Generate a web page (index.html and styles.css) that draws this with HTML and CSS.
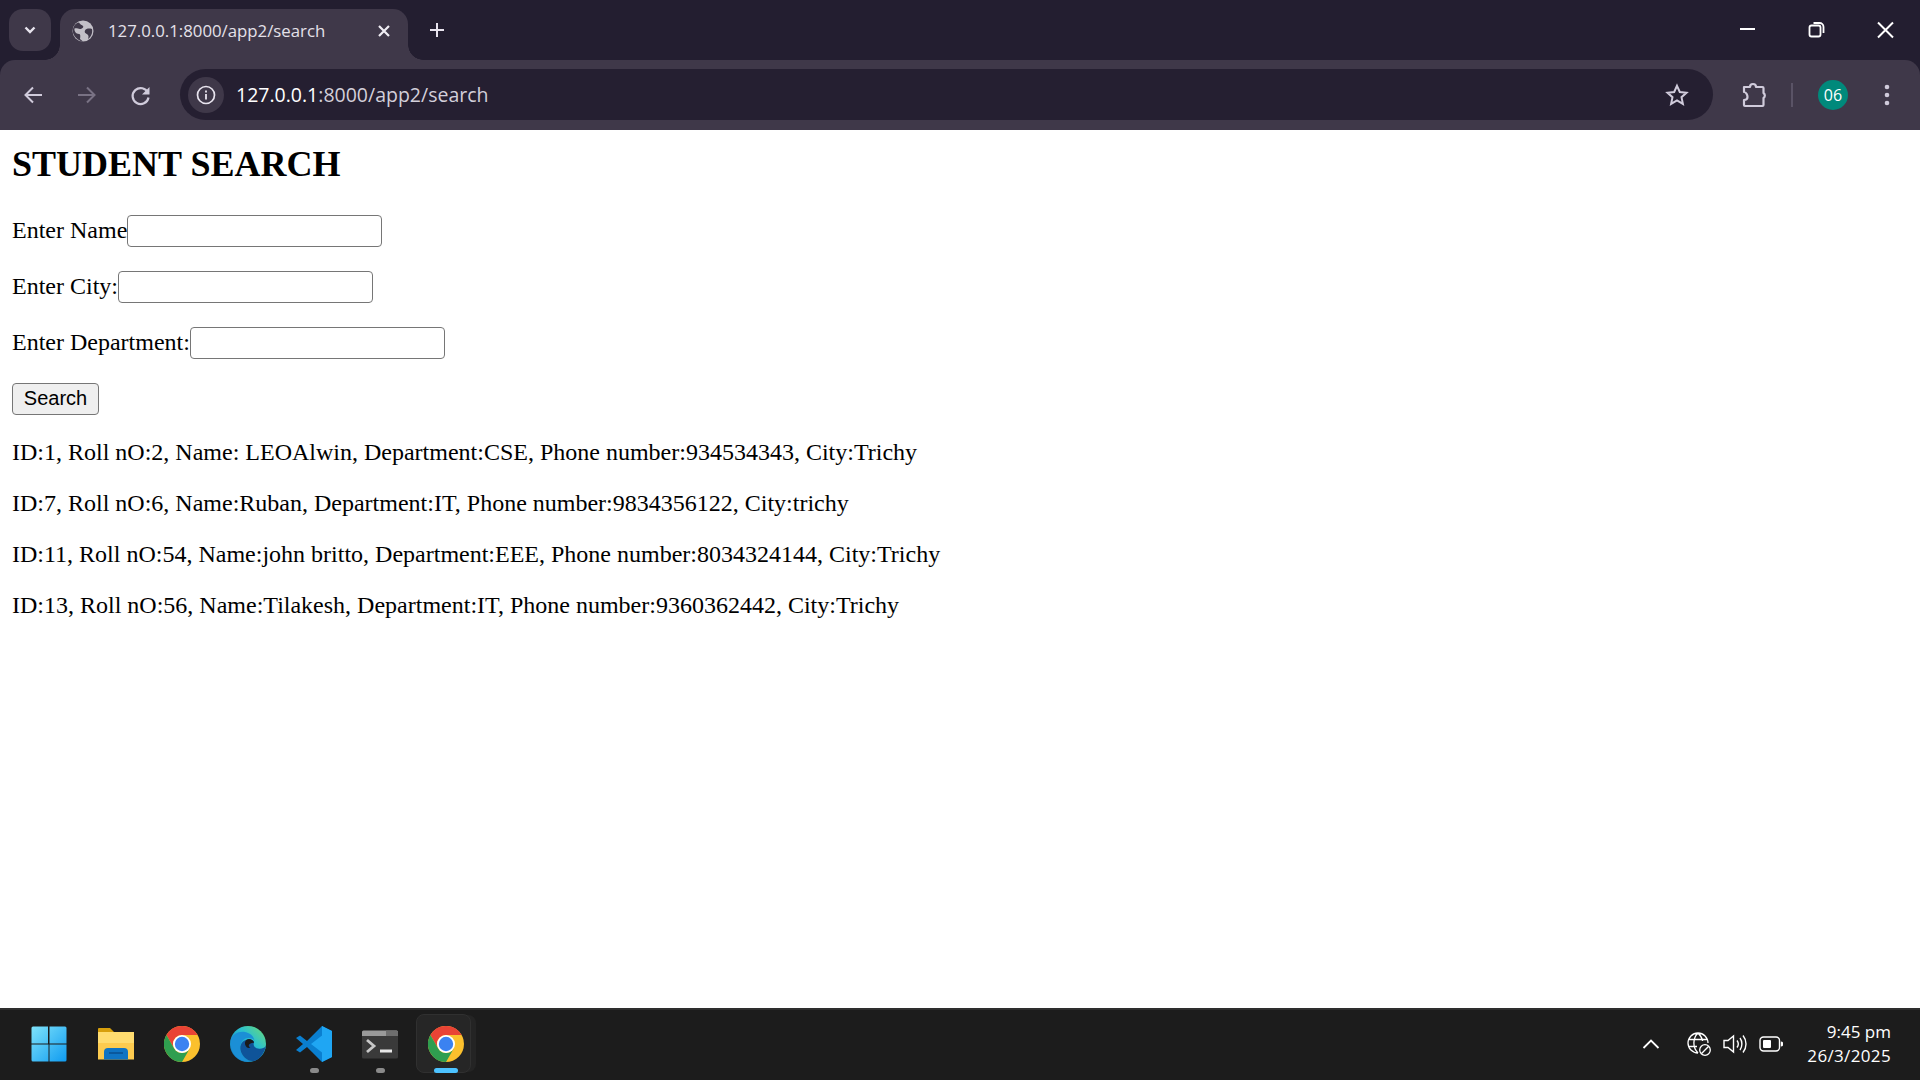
FILE: index.html
```html
<!DOCTYPE html>
<html lang="en">
<head>
<meta charset="utf-8">
<title>127.0.0.1:8000/app2/search</title>
<link rel="stylesheet" href="styles.css">
</head>
<body>
<div class="screen">
  <header class="chrome">
    <div class="tabstrip">
      <div class="tabsearch"><svg width="18" height="18" viewBox="0 0 18 18"><path d="M4.500 6.500L9 11l4.500-4.500" fill="none" stroke="#e8e4ee" stroke-width="2.400"/></svg></div>
      <div class="tab">
        <svg class="favicon" width="22" height="22" viewBox="0 0 22 22"><circle cx="11" cy="11" r="10.500" fill="#c3c0c8"/><path d="M7 2.500c1 2 3 2.500 4 3.500s-1 3-3 3-3-1-5.500-.5C2 11 4 14 7 14c1.500 0 1.500 2 1 5l3 2.500C7 21 1 17 .8 11 .8 6 4 3 7 2.500zM20 9c-3-1-6-.5-7 1.500s1 3 2.500 4 1 3 .5 4.500c3-2 4.800-6 4-10z" fill="#3f3849"/></svg>
        <span class="tabtitle">127.0.0.1:8000/app2/search</span>
        <svg class="tabclose" width="14" height="14" viewBox="0 0 14 14"><path d="M2 2l10 10M12 2L2 12" stroke="#f0edf4" stroke-width="2.200"/></svg>
      </div>
      <svg class="newtab" width="18" height="18" viewBox="0 0 18 18"><path d="M9 2v14M2 9h14" stroke="#e8e4ee" stroke-width="2"/></svg>
      <div class="caption">
        <svg width="70" height="60" viewBox="0 0 70 60"><path d="M28 29h15" stroke="#fff" stroke-width="2"/></svg>
        <svg width="70" height="60" viewBox="0 0 70 60"><path d="M27.500 27.500a2 2 0 0 1 2-2h7a2 2 0 0 1 2 2v7a2 2 0 0 1-2 2h-7a2 2 0 0 1-2-2zM31.500 23h6a4 4 0 0 1 4 4v6" fill="none" stroke="#fff" stroke-width="1.800"/></svg>
        <svg width="68" height="60" viewBox="0 0 68 60"><path d="M26 22.500l15 15M41 22.500l-15 15" stroke="#fff" stroke-width="2"/></svg>
      </div>
    </div>
    <div class="toolbar">
      <svg class="navicon" width="24" height="24" viewBox="0 0 24 24"><path d="M21 12H5M12 4.500L4.500 12l7.500 7.500" fill="none" stroke="#d0cbdb" stroke-width="2"/></svg>
      <svg class="navicon" width="24" height="24" viewBox="0 0 24 24"><path d="M3 12h16M12 4.500l7.500 7.500-7.500 7.500" fill="none" stroke="#797284" stroke-width="2"/></svg>
      <svg class="navicon" width="24" height="24" viewBox="0 0 24 24"><path d="M19 10a8 8 0 1 0 .5 4.500" fill="none" stroke="#d0cbdb" stroke-width="2.200"/><path d="M20.500 4v7.500H13z" fill="#d0cbdb"/></svg>
      <div class="omnibox">
        <div class="siteinfo"><svg width="20" height="20" viewBox="0 0 20 20"><circle cx="10" cy="10" r="8.500" fill="none" stroke="#e8e4ee" stroke-width="1.700"/><path d="M10 9v5.500M10 5.500v2" stroke="#e8e4ee" stroke-width="1.800"/></svg></div>
        <span class="url"><span class="host">127.0.0.1</span>:8000/app2/search</span>
        <svg class="star" width="24" height="24" viewBox="0 0 24 24"><path d="M12 2.800l2.800 6.200 6.700.7-5 4.500 1.400 6.700-5.900-3.400-5.900 3.400 1.400-6.700-5-4.500 6.700-.7z" fill="none" stroke="#d0cbdb" stroke-width="2"/></svg>
      </div>
      <svg class="puzzle" width="26" height="26" viewBox="0 0 26 26"><path d="M3 5h6a3 3 0 0 1 6 0h6.500a1 1 0 0 1 1 1v5a3 3 0 0 1 0 5v7a1 1 0 0 1-1 1H4a1 1 0 0 1-1-1v-5c3 0 3.500-1.500 3.500-3S5.500 10 3 10z" fill="none" stroke="#d0cbdb" stroke-width="2.200" stroke-linejoin="round"/></svg>
      <div class="divider"></div>
      <div class="avatar">06</div>
      <svg class="kebab" width="8" height="24" viewBox="0 0 8 24"><circle cx="4" cy="4" r="2.300" fill="#d0cbdb"/><circle cx="4" cy="12" r="2.300" fill="#d0cbdb"/><circle cx="4" cy="20" r="2.300" fill="#d0cbdb"/></svg>
    </div>
  </header>

  <main class="page">
    <h2 class="title">STUDENT SEARCH</h2>
    <form class="search">
      <p class="row">Enter Name<input class="field" type="text"></p>
      <p class="row">Enter City:<input class="field" type="text"></p>
      <p class="row">Enter Department:<input class="field" type="text"></p>
      <p class="row"><button class="btn" type="button">Search</button></p>
    </form>
    <p class="result">ID:1, Roll nO:2, Name: LEOAlwin, Department:CSE, Phone number:934534343, City:Trichy</p>
    <p class="result">ID:7, Roll nO:6, Name:Ruban, Department:IT, Phone number:9834356122, City:trichy</p>
    <p class="result">ID:11, Roll nO:54, Name:john britto, Department:EEE, Phone number:8034324144, City:Trichy</p>
    <p class="result">ID:13, Roll nO:56, Name:Tilakesh, Department:IT, Phone number:9360362442, City:Trichy</p>
  </main>

  <footer class="taskbar">
    <div class="apps">
      <div class="app start"><svg width="36" height="36" viewBox="0 0 36 36"><defs><linearGradient id="w" x1="0" y1="0" x2="1" y2="1"><stop offset="0" stop-color="#7fe3fb"/><stop offset="1" stop-color="#0f9bf0"/></linearGradient></defs><path d="M.500 2a1.500 1.500 0 0 1 1.500-1.500h15v17H.500zM18.500.500H34A1.500 1.500 0 0 1 35.500 2v15.500h-17zM.500 18.500h17v17H2A1.500 1.500 0 0 1 .500 34zM18.500 18.500h17V34a1.500 1.500 0 0 1-1.500 1.500H18.500z" fill="url(#w)"/></svg></div>
      <div class="app"><svg width="36" height="36" viewBox="0 0 36 36"><path d="M0 3a1 1 0 0 1 1-1h11l4 4H0z" fill="#d79f0c"/><path d="M0 6h36v27.500H0z" fill="#fdcb4f"/><path d="M0 6h36v11H0z" fill="#ffdc6f"/><path d="M6 33.500V26a4 4 0 0 1 4-4h16a4 4 0 0 1 4 4v7.500z" fill="#0f74c4"/><path d="M11 27h14" stroke="#0a4f90" stroke-width="1.500"/></svg></div>
      <div class="app"><svg width="36" height="36" viewBox="0 0 36 36"><use href="#chromelogo"/></svg></div>
      <div class="app"><svg width="36" height="36" viewBox="0 0 36 36"><defs><linearGradient id="e1" x1="0" y1="1" x2="1" y2="0"><stop offset="0" stop-color="#0c6fc4"/><stop offset=".6" stop-color="#2ac0d0"/><stop offset="1" stop-color="#6fdc70"/></linearGradient></defs><circle cx="18" cy="18" r="18" fill="url(#e1)"/><path d="M36 20c-2 2.500-5 3-8 2.500-4-.7-5-3.500-4-6 .6-1.500-2-3.500-5.500-3C13 14 9.500 18 10.500 24c1 6 8 12 13 11 6-1 11-8 12.500-15z" fill="#0f5499"/><path d="M19 13c-3 0-5 3-3.500 6.500 1 2.500 3.500 3 5 2-2-.5-2.500-3 0-4 2-1 3.500-.5 3.500-1-.5-2-3-3.500-5-3.500z" fill="#1b1b1b"/><path d="M.500 15C2 8 9 5 15 6c5 1 9 4 9.500 9-.5-2-3-3-6-3-5 0-9 4.500-8.500 11 .4 5 4 10 9 12.500C9 36 0 28 .500 15z" fill="#1b8fd6"/></svg></div>
      <div class="app"><svg width="36" height="36" viewBox="0 0 36 36"><path d="M26 0l10 5v26l-10 5L11 21l-7 5.500L0 24l7-6-7-6 4-2.500L11 15z" fill="#0a7fd0"/><path d="M26 0l10 5v26l-10 5zM26 9.500L15 18l11 8.500z" fill="#1fa6f3" fill-rule="evenodd"/></svg><i class="pip"></i></div>
      <div class="app"><svg width="36" height="36" viewBox="0 0 36 36"><g transform="translate(0 4)"><path d="M0 1h36v26a1.500 1.500 0 0 1-1.500 1.500h-33A1.500 1.500 0 0 1 0 27z" fill="#3a3a3a"/><path d="M0 2A1.500 1.500 0 0 1 1.500.500h33A1.500 1.500 0 0 1 36 2v4H0z" fill="#9a9a9a"/><path d="M24 .5h10.500A1.500 1.500 0 0 1 36 2v4H24z" fill="#6e6e6e"/><path d="M5 10l7 6-7 6" fill="none" stroke="#c8c8c8" stroke-width="2.800"/><path d="M18 21h12" stroke="#e8e8e8" stroke-width="3"/></g></svg><i class="pip"></i></div>
      <div class="app active"><svg width="36" height="36" viewBox="0 0 36 36"><defs><g id="chromelogo"><circle cx="18" cy="18" r="18" fill="#fbc02d"/><path d="M2.410 9A18 18 0 0 1 33.590 9H18a9 9 0 0 0-7.800 13.500z" fill="#e94335"/><path d="M2.410 9A18 18 0 0 0 18 36l7.800-13.500a9 9 0 0 1-15.600 0z" fill="#2f9e4f"/><circle cx="18" cy="18" r="9" fill="#fff"/><circle cx="18" cy="18" r="7.200" fill="#3b82f1"/></g></defs><use href="#chromelogo"/></svg><i class="pip wide"></i></div>
    </div>
    <div class="tray">
      <svg class="chev" width="18" height="12" viewBox="0 0 18 12"><path d="M1.500 10L9 2.500 16.500 10" fill="none" stroke="#fff" stroke-width="1.800"/></svg>
      <svg class="trayicon" width="24" height="24" viewBox="0 0 24 24"><g fill="none" stroke="#fff" stroke-width="1.300"><path d="M11 21A10 10 0 1 1 21 11M1.500 7.500h19M1.500 14.500H10M11 1c-5.500 5.500-5.500 14.500 0 20M11 1c3 3 4.300 5.500 4.600 8"/><circle cx="18" cy="18" r="5.300"/><path d="M14.300 21.700l7.400-7.400"/></g></svg>
      <svg class="trayicon" width="24" height="24" viewBox="0 0 24 24"><g fill="none" stroke="#fff" stroke-width="1.400"><path d="M1 8.500h4L10.500 4v16L5 15.500H1z"/><path d="M14 8.500c1.500 2 1.500 5 0 7M17 6c2.500 3.500 2.500 8.500 0 12M20 3.500c4 5 4 12 0 17"/></g></svg>
      <svg class="trayicon" width="24" height="18" viewBox="0 0 24 18"><rect x="1" y="2" width="19.500" height="14" rx="3.500" fill="none" stroke="#fff" stroke-width="1.400"/><rect x="4" y="5" width="8" height="8" rx="1" fill="#fff"/><path d="M21.800 6.500a2.500 2.500 0 0 1 0 5z" fill="#fff"/></svg>
      <div class="clock"><span>9:45 pm</span><span class="date">26/3/2025</span></div>
    </div>
  </footer>
</div>
</body>
</html>
```
FILE: styles.css
```css
* { box-sizing: border-box; }
html, body { margin: 0; height: 100%; }
body { overflow: hidden; background: #fff; }
.screen { width: 1920px; height: 1080px; display: flex; flex-direction: column; }

.chrome { height: 130px; flex: none; background: #231e30; font-family: "Segoe UI", "Open Sans", "Noto Sans", sans-serif; }
.tabstrip { height: 60px; display: flex; align-items: flex-start; padding: 9px 0 0 9px; }
.tabsearch { width: 42px; height: 42px; border-radius: 14px; background: #3f3849; display: flex; align-items: center; justify-content: center; }
.tab { position: relative; width: 348px; height: 51px; margin-left: 9px; background: #3f3849; border-radius: 15px 15px 0 0; display: flex; align-items: center; padding: 0 17px 8px 12px; }
.tab::before, .tab::after { content: ""; position: absolute; bottom: 0; width: 15px; height: 15px; }
.tab::before { left: -15px; background: radial-gradient(circle at 0 0, transparent 14.5px, #3f3849 15px); }
.tab::after { right: -15px; background: radial-gradient(circle at 100% 0, transparent 14.5px, #3f3849 15px); }
.favicon { flex: none; }
.tabtitle { margin-left: 14px; flex: 1; font-size: 16.8px; color: #e4e1e9; white-space: nowrap; }
.tabclose { flex: none; }
.newtab { margin: 12px 0 0 20px; }
.caption { margin-left: auto; margin-top: -9px; display: flex; }

.toolbar { height: 70px; background: #3f3849; border-radius: 15px 15px 0 0; display: flex; align-items: center; padding: 0 21px 1px; }
.navicon { flex: none; margin-right: 30px; }
.omnibox { width: 1533px; height: 51px; margin-left: -3px; background: #251f31; border-radius: 26px; display: flex; align-items: center; padding: 0 24px 0 8px; }
.siteinfo { width: 36px; height: 36px; border-radius: 50%; background: #3f3849; display: flex; align-items: center; justify-content: center; }
.url { margin-left: 12px; flex: 1; font-size: 19.5px; color: #d3cfda; white-space: nowrap; }
.host { color: #fff; }
.star { flex: none; }
.puzzle { flex: none; margin-left: 28px; }
.divider { width: 2px; height: 24px; margin-left: 24px; background: #5a5366; }
.avatar { width: 30px; height: 30px; margin-left: 25px; border-radius: 50%; background: #00897b; color: #fff; font-size: 16px; display: flex; align-items: center; justify-content: center; }
.kebab { flex: none; margin-left: 35px; }

.page { flex: 1; padding: 13px 12px 12px; font-family: "Liberation Serif", "Times New Roman", serif; font-size: 24px; color: #000; overflow: hidden; }
.title { margin: 0 0 30px; font-size: 36px; font-weight: bold; }
.search { margin: 0; }
.row { margin: 0 0 24px; height: 32px; line-height: 30px; display: flex; align-items: flex-start; }
.result { margin: 0 0 24px; }
.field { width: 255px; height: 32px; padding: 0; border: 1px solid #767676; border-radius: 4px; background: #fff; }
.btn { width: 87px; height: 32px; padding: 0 0 2px; border: 1px solid #767676; border-radius: 4px; background: #efefef; color: #000; font-family: "Liberation Sans", Arial, sans-serif; font-size: 20px; line-height: 1; }

.taskbar { height: 72px; flex: none; background: #1c1c1c; border-top: 2px solid #2e2e2e; display: flex; align-items: center; justify-content: space-between; font-family: "Segoe UI", "Open Sans", "Noto Sans", sans-serif; color: #fff; }
.apps { display: flex; align-items: center; padding-left: 17px; height: 100%; }
.app { position: relative; width: 66px; height: 100%; padding-bottom: 2px; display: flex; align-items: center; justify-content: center; }
.app svg { position: relative; z-index: 2; }
.start svg { margin-left: -3px; }
.active::before { content: ""; position: absolute; left: 3px; top: 4px; bottom: 7px; width: 53px; border-radius: 8px; background: #262626; border: 1px solid #303030; z-index: 1; }
.active::after { content: ""; position: absolute; left: 44px; top: 5px; bottom: 8px; width: 19px; border-radius: 0 8px 8px 0; background: #242424; z-index: 0; }
.pip { position: absolute; left: 50%; bottom: 7px; width: 9px; height: 5px; margin-left: -4.5px; border-radius: 3px; background: #8a8a8a; z-index: 3; }
.pip.wide { width: 24px; margin-left: -12px; background: #4cc2ff; }
.tray { display: flex; align-items: center; padding-right: 29px; }
.chev { flex: none; margin-bottom: 3px; margin-right: 15px; }
.trayicon { flex: none; margin-left: 12px; margin-bottom: 3px; }
.clock { margin-left: 24px; padding-bottom: 3px; display: flex; flex-direction: column; align-items: flex-end; font-size: 17px; line-height: 24px; }
.date { letter-spacing: .35px; }
```
